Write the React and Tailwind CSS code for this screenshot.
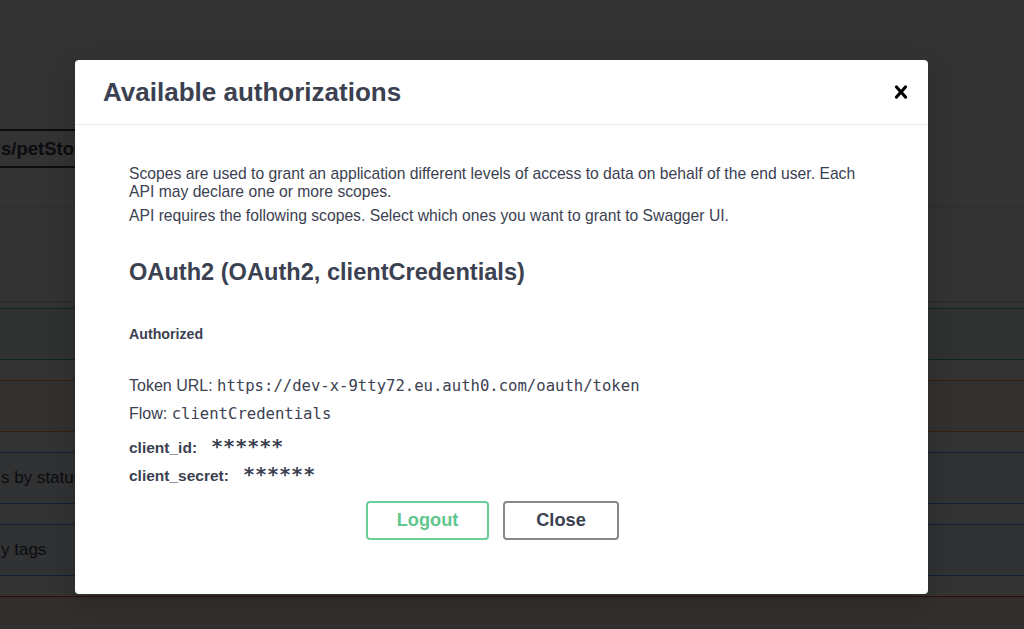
import React from 'react';

const textColor = 'text-[#3b4151]';
const mono = "font-['DejaVu_Sans_Mono','Liberation_Mono',monospace]";

const OpBlock = ({ border, bg, children }) => (
    <div className={`h-[52px] -ml-[10px] w-[1100px] border rounded-[4px] flex items-center ${border} ${bg}`}>
        {children}
    </div>
);

const CloseIcon = () => (
    <svg width="26" height="26" viewBox="0 0 20 20" aria-hidden="true">
        <path
            fill="#000"
            d="M14.348 14.849a1.2 1.2 0 0 1-1.697 0L10 11.819l-2.651 3.029a1.2 1.2 0 1 1-1.697-1.697l2.758-3.15-2.759-3.152a1.2 1.2 0 1 1 1.697-1.697L10 8.183l2.651-3.031a1.2 1.2 0 1 1 1.697 1.697l-2.758 3.152 2.758 3.15a1.2 1.2 0 0 1 0 1.698z"
        />
    </svg>
);

const App = () => {
    return (
        <div className="relative w-[1024px] h-[629px] overflow-hidden bg-white font-['Liberation_Sans',Arial,sans-serif]">
            {/* Page behind the modal */}
            <div className="pt-[129px]">
                <div className={`-ml-[20px] w-[520px] h-[39px] border-2 border-[#41444e] rounded-[4px] flex items-center pl-[19px] text-[18.5px] font-bold ${textColor}`}>
                    s/petStore
                </div>
                <div className="h-[39px] border-b border-black/10" />
                <div className="h-[95px] border-b border-[#3b4151]/30" />
                <div className="mt-[6px] flex flex-col gap-[20px]">
                    <OpBlock border="border-[#49cc90]" bg="bg-[#49cc90]/10" />
                    <OpBlock border="border-[#fca130]" bg="bg-[#fca130]/10" />
                    <OpBlock border="border-[#61affe]" bg="bg-[#61affe]/10">
                        <span className={`pl-[10px] text-[17px] ${textColor}`}>s by status</span>
                    </OpBlock>
                    <OpBlock border="border-[#61affe]" bg="bg-[#61affe]/10">
                        <span className={`pl-[10px] text-[17px] ${textColor}`}>y tags</span>
                    </OpBlock>
                    <OpBlock border="border-[#f93e3e]" bg="bg-[#f93e3e]/10" />
                </div>
            </div>

            {/* Backdrop + modal */}
            <div className="absolute inset-0 bg-black/80 pt-[60px] pl-[75px]">
                <div className="w-[853px] bg-white rounded-[4px] shadow-[0_10px_30px_0_rgba(0,0,0,0.2)]">
                    <div className="h-[65px] border-b border-[#e8e8e8] flex items-center justify-between pl-[28px] pr-[14px]">
                        <h3 className={`text-[26px] leading-[30px] font-bold ${textColor}`}>Available authorizations</h3>
                        <button className="flex items-center justify-center">
                            <CloseIcon />
                        </button>
                    </div>

                    <div className={`pt-[40px] pb-[54px] pl-[54px] pr-[54px] ${textColor}`}>
                        <p className="text-[15.7px] leading-[18px]">
                            Scopes are used to grant an application different levels of access to data on behalf of the end user. Each API may declare one or more scopes.
                        </p>
                        <p className="mt-[6px] text-[15.7px] leading-[18px]">
                            API requires the following scopes. Select which ones you want to grant to Swagger UI.
                        </p>

                        <h4 className="mt-[33px] text-[23.6px] leading-[28px] font-bold">OAuth2 (OAuth2, clientCredentials)</h4>

                        <h6 className="mt-[39px] text-[14.2px] leading-[18px] font-bold">Authorized</h6>

                        <p className="mt-[33px] h-[20px] text-[16px] leading-[20px]">
                            Token URL: <code className={`${mono} text-[15.6px]`}>https://dev-x-9tty72.eu.auth0.com/oauth/token</code>
                        </p>
                        <p className="mt-[8px] h-[20px] text-[16px] leading-[20px]">
                            Flow: <code className={`${mono} text-[15.6px]`}>clientCredentials</code>
                        </p>

                        <div className="mt-[8px] h-[28px] flex items-baseline leading-[28px]">
                            <label className="text-[15.5px] font-bold">client_id:</label>
                            <code className={`ml-[14px] ${mono} text-[20px] font-bold`}>******</code>
                        </div>
                        <div className="h-[28px] flex items-baseline leading-[28px]">
                            <label className="text-[15.5px] font-bold">client_secret:</label>
                            <code className={`ml-[14px] ${mono} text-[20px] font-bold`}>******</code>
                        </div>

                        <div className="mt-[13px] flex justify-center gap-[14px] pr-[18px]">
                            <button className="w-[123px] h-[39px] border-2 border-[#6bcd97] rounded-[4px] text-[18.2px] font-bold text-[#62c68e]">
                                Logout
                            </button>
                            <button className="w-[116px] h-[39px] border-2 border-[#888888] rounded-[4px] text-[18.2px] font-bold text-[#3b4151]">
                                Close
                            </button>
                        </div>
                    </div>
                </div>
            </div>
        </div>
    );
};

export default App;
